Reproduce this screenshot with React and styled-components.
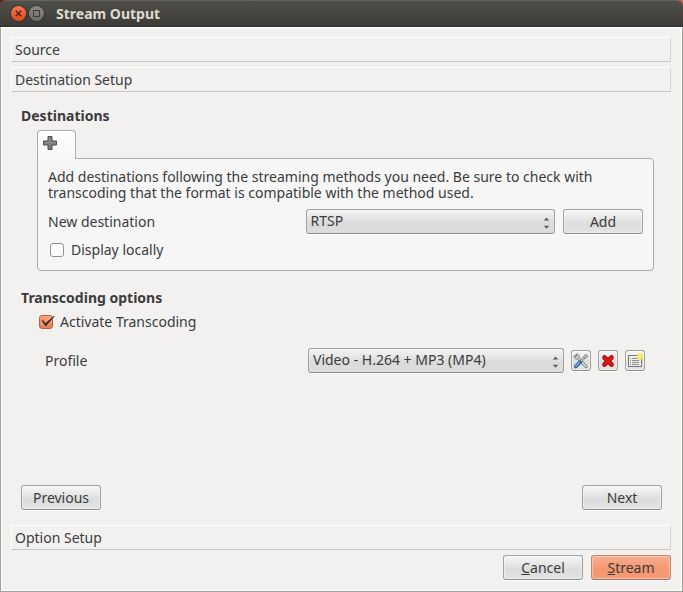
import React, { useState } from 'react';
import styled, { createGlobalStyle } from 'styled-components';

const GlobalStyle = createGlobalStyle`
  * {
    box-sizing: border-box;
  }

  body {
    margin: 0;
    background: linear-gradient(90deg, #6a1a22 0%, #d9664f 100%);
    font-family: "Noto Sans", "Open Sans", sans-serif;
    font-size: 14px;
    line-height: 16px;
    color: #3c3c3c;
  }

  button, select, input {
    font: inherit;
    color: inherit;
    margin: 0;
  }
`;

const Window = styled.div`
  display: flex;
  flex-direction: column;
  min-height: 100vh;
`;

const TitleBar = styled.header`
  display: flex;
  align-items: center;
  gap: 3px;
  height: 27px;
  padding: 0 11px;
  border-top: 1px solid #63625b;
  border-bottom: 1px solid #2c2b28;
  border-radius: 6px 6px 0 0;
  background: linear-gradient(#4f4e48, #3c3b37);
`;

const WindowButton = styled.button`
  display: flex;
  width: 15px;
  height: 15px;
  padding: 0;
  border: none;
  border-radius: 50%;
  background: ${(props) => (props.$close ? 'linear-gradient(#f4794f, #df4a1a)' : 'linear-gradient(#8b8a83, #6b6a64)')};
  box-shadow: 0 0 0 1px #35342f;
`;

const Title = styled.h1`
  margin: 0 0 0 9px;
  font-size: 14px;
  line-height: 16px;
  font-weight: 700;
  color: #dfdbd2;
`;

const Body = styled.main`
  display: flex;
  flex: 1;
  flex-direction: column;
  gap: 5px;
  padding: 9px 11px 11px 10px;
  border: 1px solid #a09f9c;
  border-top-color: #fff;
  box-shadow: inset 1px 0 #fff, inset -1px 0 #fff, inset 0 -1px #fff;
  background: #f2f1f0;
`;

const SectionBar = styled.button`
  height: 25px;
  padding: 0 3px;
  text-align: left;
  background: #f2f1f0;
  border: 1px solid;
  border-color: #fff #d4d3d2 #c8c7c6 #fff;
`;

const Page = styled.section`
  display: flex;
  flex: 1;
  flex-direction: column;
  padding: 11px 9px 10px 10px;
`;

const Heading = styled.h2`
  margin: 0 0 6px;
  font-size: 14px;
  line-height: 16px;
  font-weight: 700;
`;

const Tabs = styled.div`
  display: flex;
  flex-direction: column;
  align-items: flex-start;
  margin: 0 8px 19px 16px;
`;

const Tab = styled.button`
  z-index: 1;
  width: 39px;
  height: 29px;
  padding: 0 5px 4px;
  margin-bottom: -1px;
  text-align: left;
  border: 1px solid #aeaca9;
  border-bottom: none;
  border-radius: 4px 4px 0 0;
  background: linear-gradient(#fff, #f6f6f6);

  svg {
    display: block;
  }
`;

const TabPanel = styled.div`
  display: flex;
  flex-direction: column;
  gap: 8px;
  width: 100%;
  padding: 10px 10px 12px;
  border: 1px solid #aeaca9;
  border-radius: 0 4px 4px 4px;
  background: #f6f6f6;
`;

const Hint = styled.p`
  max-width: 560px;
  margin: 0;
`;

const DestinationRow = styled.div`
  display: grid;
  grid-template-columns: 1fr 1fr 80px;
  align-items: center;
  gap: 8px;
`;

const Transcoding = styled.div`
  display: flex;
  flex-direction: column;
  gap: 18px;
  padding: 2px 17px 0 18px;
`;

const ProfileRow = styled.div`
  display: grid;
  grid-template-columns: 1fr 1fr 20px 20px 20px;
  align-items: center;
  gap: 7px;
  padding-left: 6px;
`;

const SelectBox = styled.div`
  position: relative;
  display: flex;

  svg {
    position: absolute;
    right: 5px;
    top: 7px;
    pointer-events: none;
  }
`;

const Select = styled.select`
  appearance: none;
  width: 100%;
  height: 25px;
  padding: 0 20px 1px 4px;
  border: 1px solid #a3a2a0;
  border-bottom-color: #8f8e8c;
  border-radius: 3px;
  background: linear-gradient(#f5f5f5, #dadada 60%, #dedede);
  box-shadow: 0 1px #fff;
`;

const Button = styled.button`
  min-width: 80px;
  height: 25px;
  padding: 0 8px;
  border: 1px solid ${(props) => (props.$primary ? '#b98873' : '#a3a2a0')};
  border-bottom-color: ${(props) => (props.$primary ? '#a27460' : '#8f8e8c')};
  border-radius: 3px;
  background: ${(props) => (props.$primary
    ? 'linear-gradient(#f9ae90, #f39670 60%, #f49c78)'
    : 'linear-gradient(#f7f7f7, #dcdcdc 60%, #e4e4e4)')};
  box-shadow: 0 1px #fff, inset 0 0 0 1px rgba(255, 255, 255, 0.35);

  &:active {
    filter: brightness(0.95);
  }
`;

const IconButton = styled(Button)`
  display: flex;
  align-items: center;
  justify-content: center;
  min-width: 0;
  height: 21px;
  padding: 0;
`;

const CheckLabel = styled.label`
  display: flex;
  align-items: center;
  gap: 7px;
  padding-left: ${(props) => props.$indent}px;
`;

const CheckBox = styled.span`
  display: grid;
  width: 14px;
  height: 14px;

  > * {
    grid-area: 1 / 1;
  }

  svg {
    overflow: visible;
    pointer-events: none;
  }
`;

const CheckInput = styled.input`
  appearance: none;
  width: 14px;
  height: 14px;
  border: 1px solid #93918f;
  border-radius: 3px;
  background: #fff;

  &:checked {
    border-color: #a8664c;
    background: linear-gradient(#f9a07c, #ee7c50);
  }
`;

const ButtonRow = styled.div`
  display: flex;
  justify-content: ${(props) => (props.$end ? 'flex-end' : 'space-between')};
  gap: 8px;
`;

const PageButtons = styled(ButtonRow)`
  margin-top: auto;
`;

const PlusIcon = () => (
  <svg width="14" height="14" viewBox="0 0 14 14" aria-hidden="true">
    <path d="M5 .5h4V5h4.500v4H9v4.500H5V9H.5V5H5z" fill="#7c807a" stroke="#4d504b" strokeLinejoin="round" />
    <path d="M6.500 2v4.500H2M7.500 6.500H12" fill="none" stroke="#8d908b" />
  </svg>
);

const Arrows = () => (
  <svg width="7" height="13" viewBox="0 0 7 13" aria-hidden="true">
    <path d="M3.500 1.500L6.200 4.500H.8zM3.500 12.800L.8 9.800h5.400z" fill="#5b5b5b" />
  </svg>
);

const ToolsIcon = () => (
  <svg width="16" height="16" viewBox="0 0 16 16" aria-hidden="true">
    <path d="M3.500 3.500L13 13.500" stroke="#777a76" strokeWidth="3.200" strokeLinecap="round" />
    <path d="M3.500 3.500L13 13.500" stroke="#e6e7e5" strokeWidth="1.400" strokeLinecap="round" />
    <path d="M1 2.500l2 1.800 1.300-1.300L2.800 1C5 .4 6.600 2 6.200 4.200L4.400 6C2.500 6.600.5 4.800 1 2.500z" fill="#dcdedb" stroke="#777a76" strokeWidth=".8" />
    <path d="M7 9l5-5" stroke="#777a76" strokeWidth="2.400" />
    <path d="M7 9l5-5" stroke="#eee" strokeWidth="1" />
    <path d="M11 3l2.500-2-.3 2 2 .2L13 5.200l-2-.2z" fill="#c9cbc8" stroke="#777a76" strokeWidth=".7" />
    <path d="M2.800 13.500L7 9.300" stroke="#204a87" strokeWidth="3.600" strokeLinecap="round" />
    <path d="M2.800 13.300L6.600 9.500" stroke="#729fcf" strokeWidth="2" strokeLinecap="round" />
  </svg>
);

const DeleteIcon = () => (
  <svg width="14" height="14" viewBox="0 0 14 14" aria-hidden="true">
    <path d="M3.500 3.500l7 7M10.500 3.500l-7 7" stroke="#9d0707" strokeWidth="4.600" strokeLinecap="round" />
    <path d="M3.500 3.500l7 7M10.500 3.500l-7 7" stroke="#dc1717" strokeWidth="2.800" strokeLinecap="round" />
  </svg>
);

const NewProfileIcon = () => (
  <svg width="16" height="16" viewBox="0 0 16 16" aria-hidden="true">
    <rect x="1.500" y="2.500" width="13" height="11" fill="#eeeeec" stroke="#777a76" />
    <path d="M3 5.500h1M3 7.500h1M3 9.500h1M3 11.500h1M5 5.500h7M5 7.500h7M5 9.500h7M5 11.500h7" stroke="#8a8d89" />
    <circle cx="13" cy="3.500" r="3.300" fill="#f5e548" fillOpacity=".9" />
    <circle cx="13" cy="3.500" r="1.500" fill="#fff27a" />
  </svg>
);

const Check = ({ id, label, indent = 0, checked, onChange }) => (
  <CheckLabel htmlFor={id} $indent={indent}>
    <CheckBox>
      <CheckInput id={id} type="checkbox" checked={checked} onChange={(e) => onChange(e.target.checked)} />
      {checked && (
        <svg width="14" height="14" viewBox="0 0 14 14" aria-hidden="true">
          <path d="M3 6.500L6.200 10L13 2.500" fill="none" stroke="#fbc5ae" strokeWidth="3.500" strokeOpacity=".6" />
          <path d="M2.500 5.800L4.300 5.300L6.300 8.200L14.500 1L15.500 1.500L6.500 11.800z" fill="#4a2a1e" />
        </svg>
      )}
    </CheckBox>
    {label}
  </CheckLabel>
);

const App = () => {
  const [destination, setDestination] = useState('RTSP');
  const [profile, setProfile] = useState('Video - H.264 + MP3 (MP4)');
  const [displayLocally, setDisplayLocally] = useState(false);
  const [transcode, setTranscode] = useState(true);

  return (
    <>
      <GlobalStyle />
      <Window>
        <TitleBar>
          <WindowButton $close aria-label="Close">
            <svg width="15" height="15" viewBox="0 0 15 15">
              <path d="M4.800 4.800l5.400 5.400M10.200 4.800l-5.400 5.400" stroke="#5a2412" strokeWidth="1.600" />
            </svg>
          </WindowButton>
          <WindowButton aria-label="Maximize">
            <svg width="15" height="15" viewBox="0 0 15 15">
              <rect x="4.500" y="4.500" width="6" height="6" fill="none" stroke="#3c3b37" />
            </svg>
          </WindowButton>
          <Title>Stream Output</Title>
        </TitleBar>
        <Body>
          <SectionBar>Source</SectionBar>
          <SectionBar>Destination Setup</SectionBar>
          <Page>
            <Heading>Destinations</Heading>
            <Tabs>
              <Tab aria-label="Add destination"><PlusIcon /></Tab>
              <TabPanel>
                <Hint>
                  Add destinations following the streaming methods you need. Be sure to check with
                  transcoding that the format is compatible with the method used.
                </Hint>
                <DestinationRow>
                  <label htmlFor="destination">New destination</label>
                  <SelectBox>
                    <Select id="destination" value={destination} onChange={(e) => setDestination(e.target.value)}>
                      <option>RTSP</option>
                    </Select>
                    <Arrows />
                  </SelectBox>
                  <Button>Add</Button>
                </DestinationRow>
                <Check
                  id="display-locally"
                  label="Display locally"
                  indent={2}
                  checked={displayLocally}
                  onChange={setDisplayLocally}
                />
              </TabPanel>
            </Tabs>
            <Heading>Transcoding options</Heading>
            <Transcoding>
              <Check
                id="transcode"
                label="Activate Transcoding"
                checked={transcode}
                onChange={setTranscode}
              />
              <ProfileRow>
                <label htmlFor="profile">Profile</label>
                <SelectBox>
                  <Select id="profile" value={profile} onChange={(e) => setProfile(e.target.value)}>
                    <option>Video - H.264 + MP3 (MP4)</option>
                  </Select>
                  <Arrows />
                </SelectBox>
                <IconButton aria-label="Edit profile"><ToolsIcon /></IconButton>
                <IconButton aria-label="Delete profile"><DeleteIcon /></IconButton>
                <IconButton aria-label="New profile"><NewProfileIcon /></IconButton>
              </ProfileRow>
            </Transcoding>
            <PageButtons>
              <Button>Previous</Button>
              <Button>Next</Button>
            </PageButtons>
          </Page>
          <SectionBar>Option Setup</SectionBar>
          <ButtonRow $end>
            <Button><u>C</u>ancel</Button>
            <Button $primary><u>S</u>tream</Button>
          </ButtonRow>
        </Body>
      </Window>
    </>
  );
};

export default App;
